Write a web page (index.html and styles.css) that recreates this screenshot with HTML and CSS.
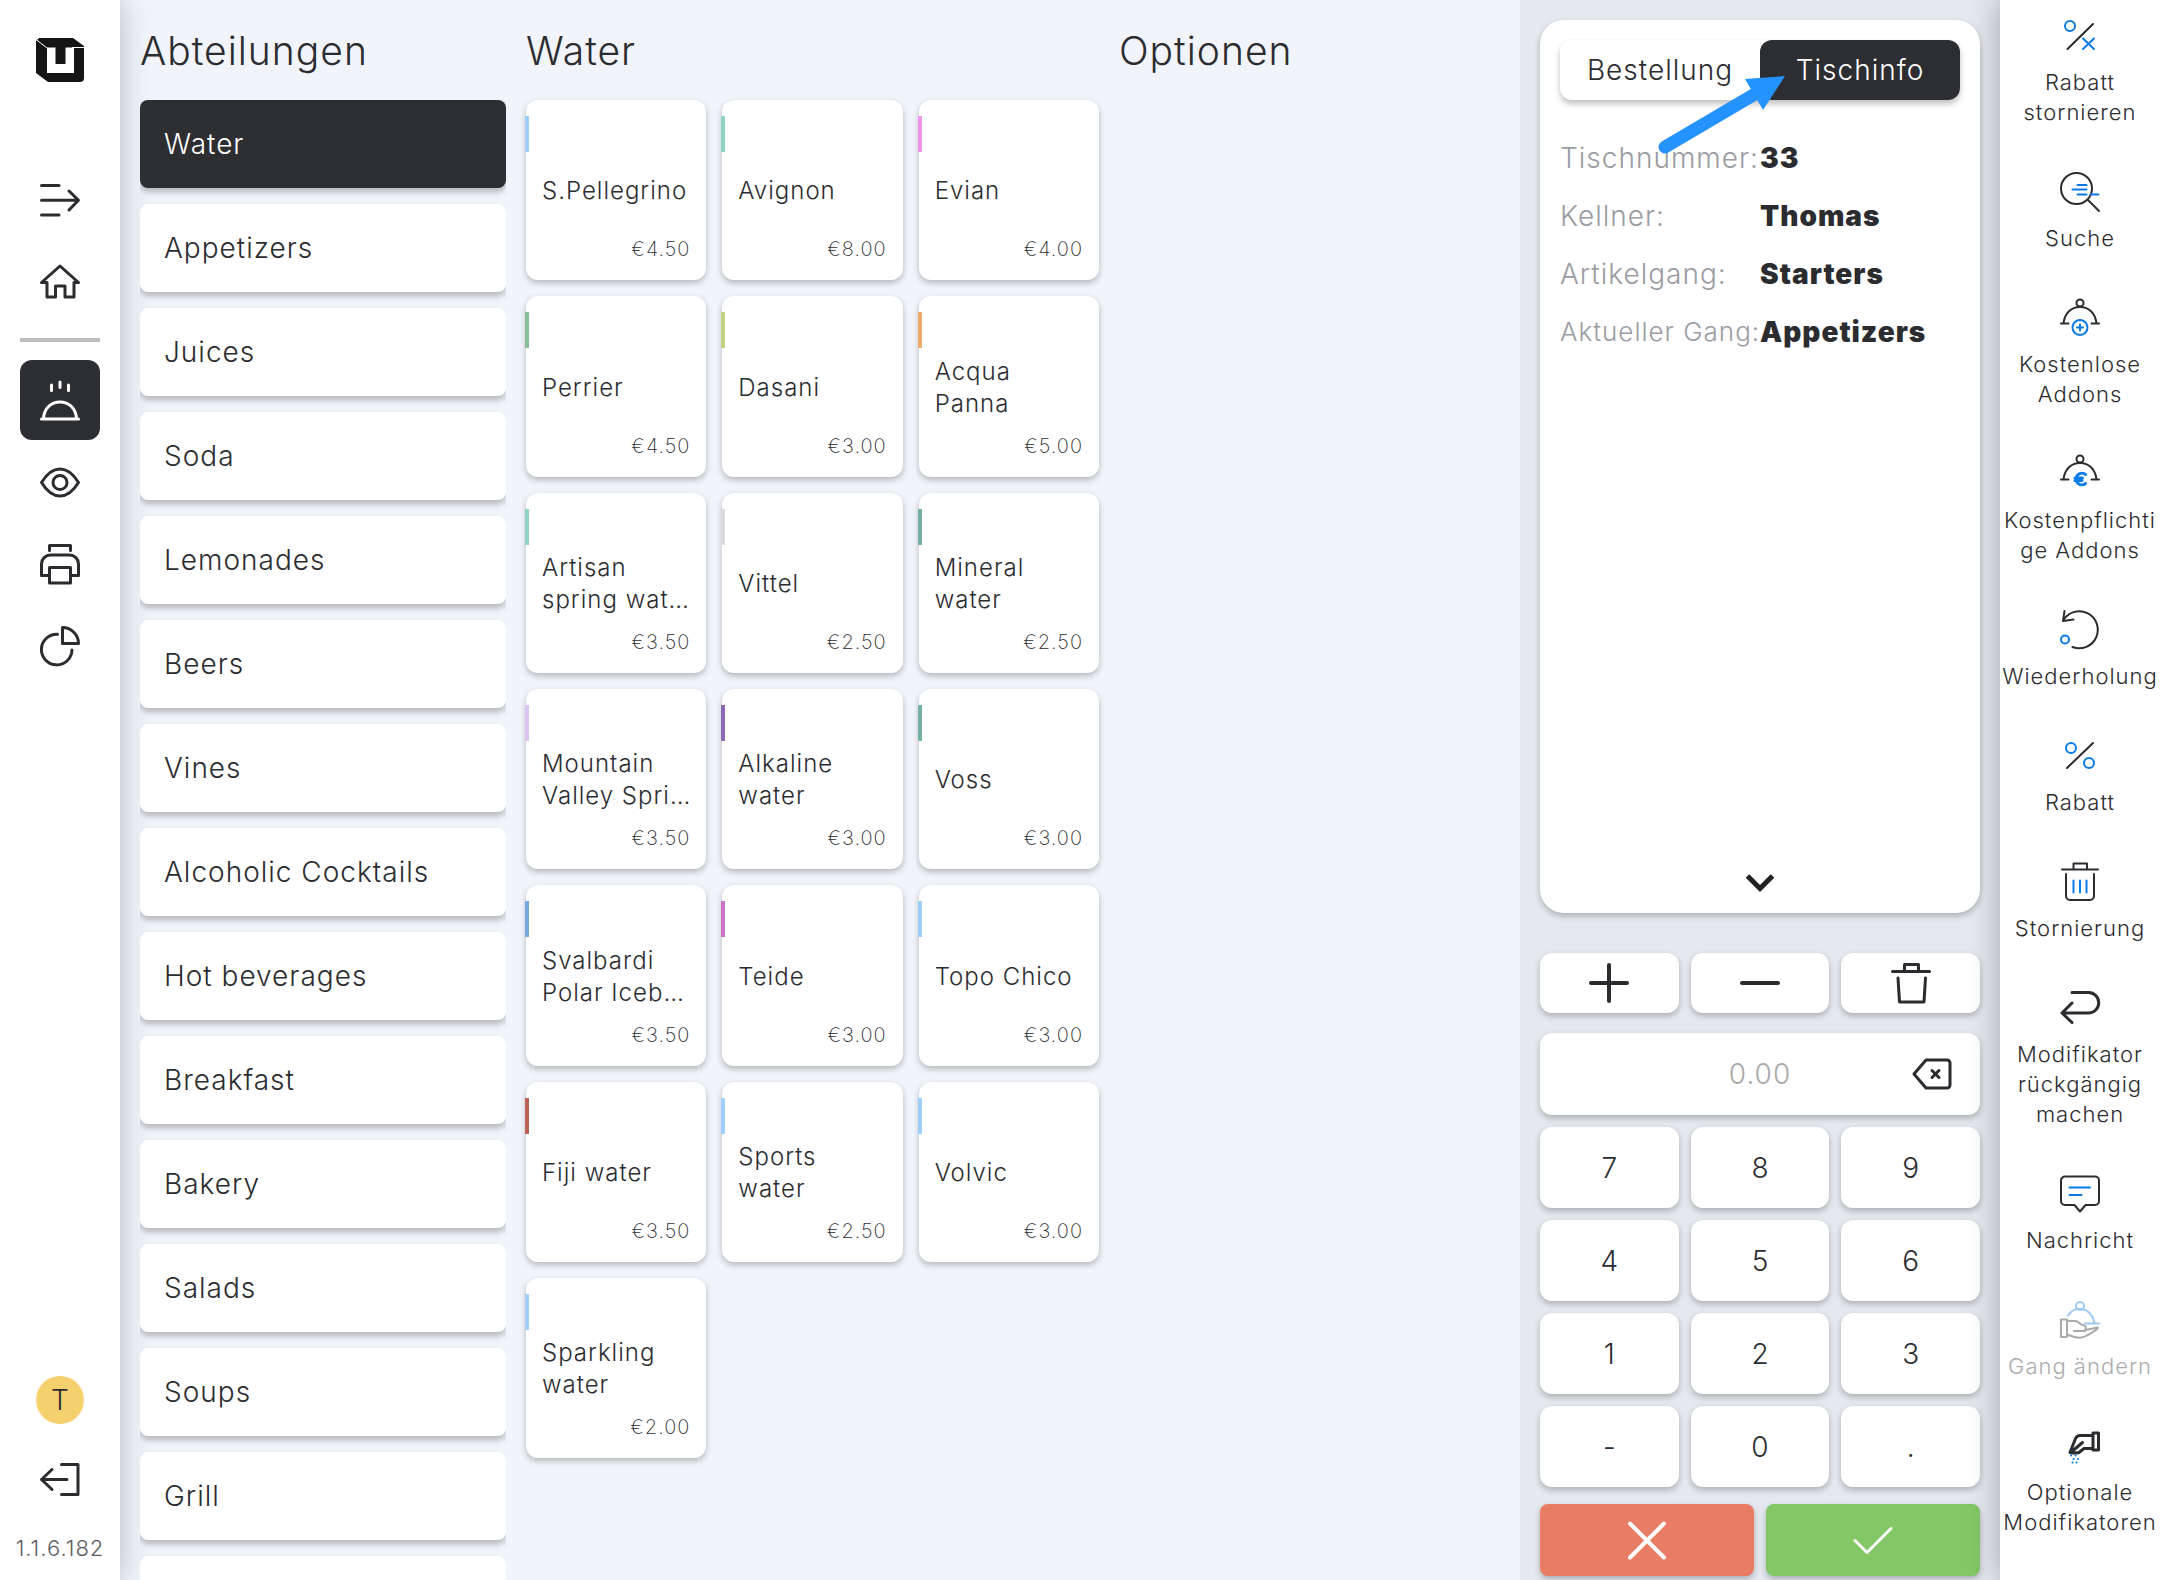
FILE: index.html
```html
<!DOCTYPE html>
<html lang="de">
<head>
<meta charset="utf-8">
<meta name="viewport" content="width=device-width, initial-scale=1">
<title>Bestellung</title>
<link rel="stylesheet" href="styles.css">
</head>
<body>
<div class="app">
  <nav class="sidebar">
    <svg class="logo" viewBox="0 0 48 44"><path class="solid" d="M3 0H37L48 8V40a4 4 0 0 1-4 4H12L0 35V3z"/><path class="cut" d="M11 9.500h8.500v16.500h10V9.500H38v25.500H11z"/><path class="seam" d="M0 1.500l11 8.500M36 9.500h12"/></svg>
    <div class="nav-group nav-top">
      <button class="nav-item" aria-label="Menü"><svg class="icon" viewBox="0 0 40 40"><path d="M1.500 5.500H19M1.500 20.300H38M1.500 35H19M29 11l9.500 9.300L29 30"/></svg></button>
      <button class="nav-item" aria-label="Start"><svg class="icon" viewBox="0 0 40 40"><path d="M1.500 20.500L20 4l18.500 16.500H34V35h-9V24h-9.500v11H7V20.500z"/></svg></button>
    </div>
    <hr class="divider">
    <div class="nav-group">
      <button class="nav-item active" aria-label="Bestellen"><svg class="icon" viewBox="0 0 40 40"><path d="M1.500 39h37M3.500 38.500C4 28.500 11 22 20 22s16 6.500 16.500 16.500M11.500 5v5.500M20 2v5.500M28.500 5v5.500"/></svg></button>
      <button class="nav-item" aria-label="Ansicht"><svg class="icon" viewBox="0 0 40 40"><path d="M1.500 20.500C7 11.500 13.500 7 20 7s13 4.500 18.500 13.500C33 29.500 26.500 34 20 34S7 29.500 1.500 20.500z"/><circle cx="20" cy="20.500" r="7"/></svg></button>
      <button class="nav-item" aria-label="Drucken"><svg class="icon" viewBox="0 0 40 40"><path d="M9.500 6.500v-5h21v5M9.500 31.500h-8V20a9 9 0 0 1 9-9h19a9 9 0 0 1 9 9v11.500h-8M9.500 23.500h21V39h-21z"/></svg></button>
      <button class="nav-item" aria-label="Berichte"><svg class="icon" viewBox="0 0 40 40"><path d="M22.500 1.500v16h16a16 16 0 0 0-16-16zM17.500 8.300A15.300 15.300 0 1 0 32 24"/></svg></button>
    </div>
    <div class="nav-foot">
      <button class="avatar">T</button>
      <button class="nav-item" aria-label="Abmelden"><svg class="icon" viewBox="0 0 40 40"><path d="M21.500 4.500H38v30H21.500M1.500 19.500H27M12 9.500l-10.500 10L12 29.500"/></svg></button>
      <span class="version">1.1.6.182</span>
    </div>
  </nav>

  <main class="main">
    <section class="col">
      <h1 class="title">Abteilungen</h1>
      <div class="departments">
        <button class="dept selected">Water</button>
        <button class="dept">Appetizers</button>
        <button class="dept">Juices</button>
        <button class="dept">Soda</button>
        <button class="dept">Lemonades</button>
        <button class="dept">Beers</button>
        <button class="dept">Vines</button>
        <button class="dept">Alcoholic Cocktails</button>
        <button class="dept">Hot beverages</button>
        <button class="dept">Breakfast</button>
        <button class="dept">Bakery</button>
        <button class="dept">Salads</button>
        <button class="dept">Soups</button>
        <button class="dept">Grill</button>
        <button class="dept"></button>
      </div>
    </section>
    <section class="col">
      <h1 class="title">Water</h1>
      <div class="products">
        <button class="product sky"><span class="name">S.Pellegrino</span><span class="price">€4.50</span></button>
        <button class="product mint"><span class="name">Avignon</span><span class="price">€8.00</span></button>
        <button class="product pink"><span class="name">Evian</span><span class="price">€4.00</span></button>
        <button class="product green"><span class="name">Perrier</span><span class="price">€4.50</span></button>
        <button class="product lime"><span class="name">Dasani</span><span class="price">€3.00</span></button>
        <button class="product orange"><span class="name">Acqua Panna</span><span class="price">€5.00</span></button>
        <button class="product mint"><span class="name">Artisan spring wat…</span><span class="price">€3.50</span></button>
        <button class="product grey"><span class="name">Vittel</span><span class="price">€2.50</span></button>
        <button class="product teal"><span class="name">Mineral water</span><span class="price">€2.50</span></button>
        <button class="product lilac"><span class="name">Mountain Valley Spri…</span><span class="price">€3.50</span></button>
        <button class="product purple"><span class="name">Alkaline water</span><span class="price">€3.00</span></button>
        <button class="product teal"><span class="name">Voss</span><span class="price">€3.00</span></button>
        <button class="product blue"><span class="name">Svalbardi Polar Iceb…</span><span class="price">€3.50</span></button>
        <button class="product magenta"><span class="name">Teide</span><span class="price">€3.00</span></button>
        <button class="product sky"><span class="name">Topo Chico</span><span class="price">€3.00</span></button>
        <button class="product red"><span class="name">Fiji water</span><span class="price">€3.50</span></button>
        <button class="product sky"><span class="name">Sports water</span><span class="price">€2.50</span></button>
        <button class="product sky"><span class="name">Volvic</span><span class="price">€3.00</span></button>
        <button class="product sky"><span class="name">Sparkling water</span><span class="price">€2.00</span></button>
      </div>
    </section>
    <section class="col">
      <h1 class="title">Optionen</h1>
    </section>
  </main>

  <aside class="order">
    <section class="info-card">
      <div class="tabs">
        <button class="tab">Bestellung</button>
        <button class="tab current">Tischinfo</button>
      </div>
      <dl class="info">
        <dt>Tischnummer:</dt><dd>33</dd>
        <dt>Kellner:</dt><dd>Thomas</dd>
        <dt>Artikelgang:</dt><dd>Starters</dd>
        <dt class="tight">Aktueller Gang:</dt><dd>Appetizers</dd>
      </dl>
      <button class="expand" aria-label="Mehr"><svg viewBox="0 0 30 20"><path d="M2.500 3L15 15.500 27.500 3"/></svg></button>
      <svg class="pointer" viewBox="0 0 140 100"><path class="shaft" d="M17 87l90-53"/><path class="head" d="M137 16L97 19l18 31z"/></svg>
    </section>
    <div class="keys actions">
      <button class="key" aria-label="Plus"><svg class="icon bold" viewBox="0 0 40 40"><path d="M2 20h36M20 2v36"/></svg></button>
      <button class="key" aria-label="Minus"><svg class="icon bold" viewBox="0 0 40 40"><path d="M2 20h36"/></svg></button>
      <button class="key" aria-label="Löschen"><svg class="icon" viewBox="0 0 40 40"><path d="M1.500 8.500h37M13.500 8.500v-7h14v7M7 15l1.500 24h24.500L34.500 15"/></svg></button>
    </div>
    <div class="amount">
      <input class="amount-input" type="text" placeholder="0.00" aria-label="Betrag">
      <button class="erase" aria-label="Zurück"><svg class="icon" viewBox="0 0 40 40"><path d="M2 20L14 6h21a3 3 0 0 1 3 3v22a3 3 0 0 1-3 3H14z"/><path d="M20 16.500l7 7M27 16.500l-7 7"/></svg></button>
    </div>
    <div class="keys pad">
      <button class="key">7</button><button class="key">8</button><button class="key">9</button>
      <button class="key">4</button><button class="key">5</button><button class="key">6</button>
      <button class="key">1</button><button class="key">2</button><button class="key">3</button>
      <button class="key">-</button><button class="key">0</button><button class="key">.</button>
    </div>
    <div class="confirm">
      <button class="choice cancel" aria-label="Abbrechen"><svg class="icon bold" viewBox="0 0 40 40"><path d="M3 3.500l34 34M37 3.500l-34 34"/></svg></button>
      <button class="choice accept" aria-label="Bestätigen"><svg class="icon" viewBox="0 0 40 40"><path d="M2 20.500L14 32.500 38 8.500"/></svg></button>
    </div>
  </aside>

  <aside class="tools">
    <button class="tool"><svg class="icon thin" viewBox="0 0 40 40"><path d="M7.500 33L33 8"/><g class="accent"><circle cx="10" cy="10" r="5"/><path d="M23 22.500l11 10.500M34 22.500L23 33"/></g></svg>Rabatt stornieren</button>
    <button class="tool"><svg class="icon thin" viewBox="0 0 40 40"><circle cx="16.500" cy="16.500" r="15.500"/><path d="M28 28l11 11"/><path class="accent" d="M17.500 13h9M12.500 17.500h14M17.500 22.500h9M30.500 22.500h8"/></svg>Suche</button>
    <button class="tool"><svg class="icon thin" viewBox="0 0 40 40"><circle cx="20" cy="5" r="3.500"/><path d="M3.500 25.500C4.500 15.500 11 9 20 9s15.500 6.500 16.500 16.500M1 25.500h7.500M31.500 25.500H39"/><g class="accent"><circle cx="20" cy="29.500" r="7.500"/><path d="M17 29.500h6M20 26.500v6"/></g></svg>Kostenlose Addons</button>
    <button class="tool"><svg class="icon thin" viewBox="0 0 40 40"><circle cx="20" cy="5" r="3.500"/><path d="M3.500 25.500C4.500 15.500 11 9 20 9s15.500 6.500 16.500 16.500M1 25.500h7.500M31.500 25.500H39"/><path class="accent euro" d="M25.500 20.500a5.800 5.800 0 1 0 0 9M15 24h7.500M15 26.500h7"/></svg>Kostenpflichtige Addons</button>
    <button class="tool"><svg class="icon thin" viewBox="0 0 40 40"><path d="M12.500 37A18.500 18.500 0 1 0 3 11M4.500 1L3 11 13.500 9.500"/><circle class="accent" cx="5" cy="29.500" r="4"/></svg>Wiederholung</button>
    <button class="tool"><svg class="icon thin" viewBox="0 0 40 40"><path d="M7 32L33 7"/><g class="accent"><circle cx="11" cy="12" r="5"/><circle cx="29" cy="27" r="5"/></g></svg>Rabatt</button>
    <button class="tool"><svg class="icon thin" viewBox="0 0 40 40"><path d="M2 7.500h36M13.500 7V1.500h13.500V7M6 12v22a4 4 0 0 0 4 4h20a4 4 0 0 0 4-4V12"/><path class="accent" d="M13.500 18.500v12M20 18.500v12M26.500 18.500v12"/></svg>Stornierung</button>
    <button class="tool"><svg class="icon" viewBox="0 0 40 40"><path d="M12 4.500h16.500a10 10 0 0 1 0 20.500H2M12 15L2 25l10 9.500"/></svg>Modifikator rückgängig machen</button>
    <button class="tool"><svg class="icon thin" viewBox="0 0 40 40"><path d="M5 2.500h30a4 4 0 0 1 4 4V27a4 4 0 0 1-4 4h-9.500L20 37.500 14.500 31H5a4 4 0 0 1-4-4V6.500a4 4 0 0 1 4-4z"/><path class="accent" d="M9.500 13.500H30M9.500 21h12"/></svg>Nachricht</button>
    <button class="tool" disabled><svg class="icon thin" viewBox="0 0 40 40"><path class="accent" d="M8 15.500c6-9.500 22-10 26.500 7M25 23.500h14"/><circle class="accent" cx="20" cy="6" r="4"/><path d="M1 19.500h6v17.500H1zM7 21h8c4 0 5 4 9 4.500 2 .5 2.500 2 1 5.500H14M25.500 30l12-2.500c2 1-7 6-10.500 8-5 3-10 3-20-1"/></svg>Gang ändern</button>
    <button class="tool"><svg class="icon" viewBox="0 0 40 40"><path d="M33 7h5.500v17H33zM33 9.500H20c-2.500 0-3.500 1-4.500 3L10 26.500c3 1 6 .5 9 0l5-4h9M22.500 16.500L12.500 25"/><path class="grains" d="M11 29.500h.1M15.500 29.500h.1M13.500 33h.1M18 33h.1M12.500 36.500h.1M16.500 36.500h.1"/></svg>Optionale Modifikatoren</button>
  </aside>
</div>
</body>
</html>
```
FILE: styles.css
```css
* { box-sizing: border-box; }

body {
  margin: 0;
  font-family: Inter, "Noto Sans", sans-serif;
  font-weight: 300;
  font-size: 28px;
  letter-spacing: 1px;
  color: #2b2c30;
  background: #f1f4fa;
}

button, input { font: inherit; color: inherit; letter-spacing: inherit; border: 0; margin: 0; padding: 0; background: none; }

.app {
  display: grid;
  grid-template-columns: 120px 1fr 480px 160px;
  height: 100vh;
  overflow: hidden;
}

.icon { display: block; width: 40px; height: 40px; fill: none; stroke: currentColor; stroke-width: 3; stroke-linecap: round; stroke-linejoin: round; overflow: visible; }
.icon.bold { stroke-width: 4; }
.icon.thin { stroke-width: 2; }
.accent { stroke: #0a7ae6; }
.euro { stroke-width: 3; }
.grains { stroke: #0a7ae6; stroke-width: 2; }

/* Left navigation */
.sidebar {
  display: flex;
  flex-direction: column;
  align-items: center;
  padding: 38px 20px 16px;
  background: #fff;
  box-shadow: 0 0 30px rgba(0, 0, 0, .25);
}
.logo { width: 48px; height: 44px; flex: none; }
.solid { fill: #151515; }
.cut { fill: #fff; }
.seam { fill: none; stroke: #fff; stroke-width: 1; }
.nav-group { display: flex; flex-direction: column; gap: 2px; }
.nav-top { margin-top: 78px; }
.nav-item { display: flex; align-items: center; justify-content: center; width: 80px; height: 80px; border-radius: 12px; }
.nav-item.active { background: #2d2e32; color: #fff; }
.divider { width: 80px; height: 4px; margin: 16px 0 18px; border: 0; background: #bdbdbd; flex: none; }
.nav-foot { display: flex; flex-direction: column; align-items: center; margin-top: auto; }
.avatar { width: 48px; height: 48px; margin-bottom: 16px; border-radius: 50%; background: #f5d06f; text-align: center; letter-spacing: 0; }
.version { margin-top: 12px; font-size: 22px; line-height: 32px; color: #5c5d60; white-space: nowrap; }

/* Catalogue */
.main {
  display: grid;
  grid-template-columns: 366fr 573fr 381fr;
  gap: 20px;
  padding: 0 20px;
  min-width: 0;
  min-height: 0;
}
.col { display: flex; flex-direction: column; min-width: 0; min-height: 0; }
.title { margin: 0; padding-top: 2px; font-size: 39px; font-weight: 300; line-height: 98px; flex: none; }
.departments { display: flex; flex-direction: column; gap: 16px; flex: 1; min-height: 0; overflow: hidden; }
.dept {
  flex: none;
  height: 88px;
  padding: 0 24px;
  border-radius: 8px;
  background: #fff;
  text-align: left;
  box-shadow: 0 4px 6px rgba(0, 0, 0, .25);
}
.dept.selected { background: #2d2e32; color: #fff; }
.products { display: grid; grid-template-columns: repeat(3, 1fr); gap: 16px; }
.product {
  position: relative;
  display: flex;
  flex-direction: column;
  justify-content: flex-end;
  aspect-ratio: 1;
  min-width: 0;
  padding: 0 12px 15px 16px;
  border-radius: 12px;
  background: #fff;
  text-align: left;
  box-shadow: 0 3px 6px rgba(0, 0, 0, .25);
}
.product::before { content: ""; position: absolute; left: -1px; top: 16px; width: 4px; height: 36px; background: var(--mark); }
.name { display: flex; align-items: center; height: 64px; font-size: 24px; line-height: 32px; }
.price { margin-top: 10px; padding-right: 4px; font-size: 20px; line-height: 32px; text-align: right; font-weight: 200; }
.sky { --mark: #a0cefa; }
.mint { --mark: #8fd3c5; }
.pink { --mark: #ec94e8; }
.green { --mark: #8abd99; }
.lime { --mark: #c0d283; }
.orange { --mark: #eaac68; }
.grey { --mark: #dadbdf; }
.teal { --mark: #74b0a3; }
.lilac { --mark: #dac4f2; }
.purple { --mark: #8d69b6; }
.blue { --mark: #78a8dc; }
.magenta { --mark: #c974c8; }
.red { --mark: #bb6154; }

/* Order panel */
.order { display: flex; flex-direction: column; padding: 20px 20px 4px; background: #e5e8ee; min-height: 0; }
.info-card {
  position: relative;
  flex: 1;
  display: flex;
  flex-direction: column;
  padding: 20px;
  border-radius: 24px;
  background: #fff;
  box-shadow: 0 3px 6px rgba(0, 0, 0, .25);
}
.tabs { display: grid; grid-template-columns: 1fr 1fr; border-radius: 12px; box-shadow: 0 4px 6px rgba(0, 0, 0, .25); }
.tab { height: 60px; border-radius: 12px; }
.tab.current { background: #2d2e32; color: #fff; }
.info { display: grid; grid-template-columns: 200px 1fr; margin: 29px 0 0; line-height: 58px; white-space: nowrap; }
.info dt { color: #9a9ca2; }
.info dt.tight { font-size: 26px; }
.info dd { margin: 0; font-weight: 900; }
.expand { align-self: center; margin-top: auto; }
.expand svg { display: block; width: 30px; height: 20px; fill: none; stroke: #222; stroke-width: 5; }
.pointer { position: absolute; left: 108px; top: 40px; width: 140px; height: 100px; }
.shaft { stroke: #2492ff; stroke-width: 13; stroke-linecap: round; }
.head { fill: #2492ff; }
.keys { display: grid; grid-template-columns: repeat(3, 1fr); gap: 12px; }
.actions { margin-top: 40px; }
.actions .key { height: 60px; }
.key, .amount { border-radius: 12px; background: #fff; box-shadow: 0 3px 6px rgba(0, 0, 0, .25); }
.key { display: flex; align-items: center; justify-content: center; height: 81px; letter-spacing: 0; }
.amount { display: flex; align-items: center; height: 82px; margin: 20px 0 12px; padding: 0 28px 0 68px; }
.amount-input { flex: 1; min-width: 0; height: 80px; text-align: center; outline: 0; }
.amount-input::placeholder { color: #a9a9a9; opacity: 1; }
.confirm { display: grid; grid-template-columns: 1fr 1fr; gap: 12px; margin-top: 17px; }
.choice { display: flex; align-items: center; justify-content: center; height: 72px; border-radius: 8px; color: #fff; box-shadow: 0 3px 6px rgba(0, 0, 0, .25); }
.cancel { background: #e97c65; }
.accept { background: #83c766; }

/* Function column */
.tools {
  display: flex;
  flex-direction: column;
  gap: 45px;
  padding: 16px 0 0;
  background: #fff;
  box-shadow: 0 0 30px rgba(0, 0, 0, .3);
  min-height: 0;
  min-width: 0;
}
.tool {
  display: flex;
  flex-direction: column;
  align-items: center;
  gap: 11px;
  flex: none;
  width: 100%;
  font-size: 22px;
  line-height: 30px;
  overflow-wrap: anywhere;
}
.tool:disabled { opacity: .4; }
```
